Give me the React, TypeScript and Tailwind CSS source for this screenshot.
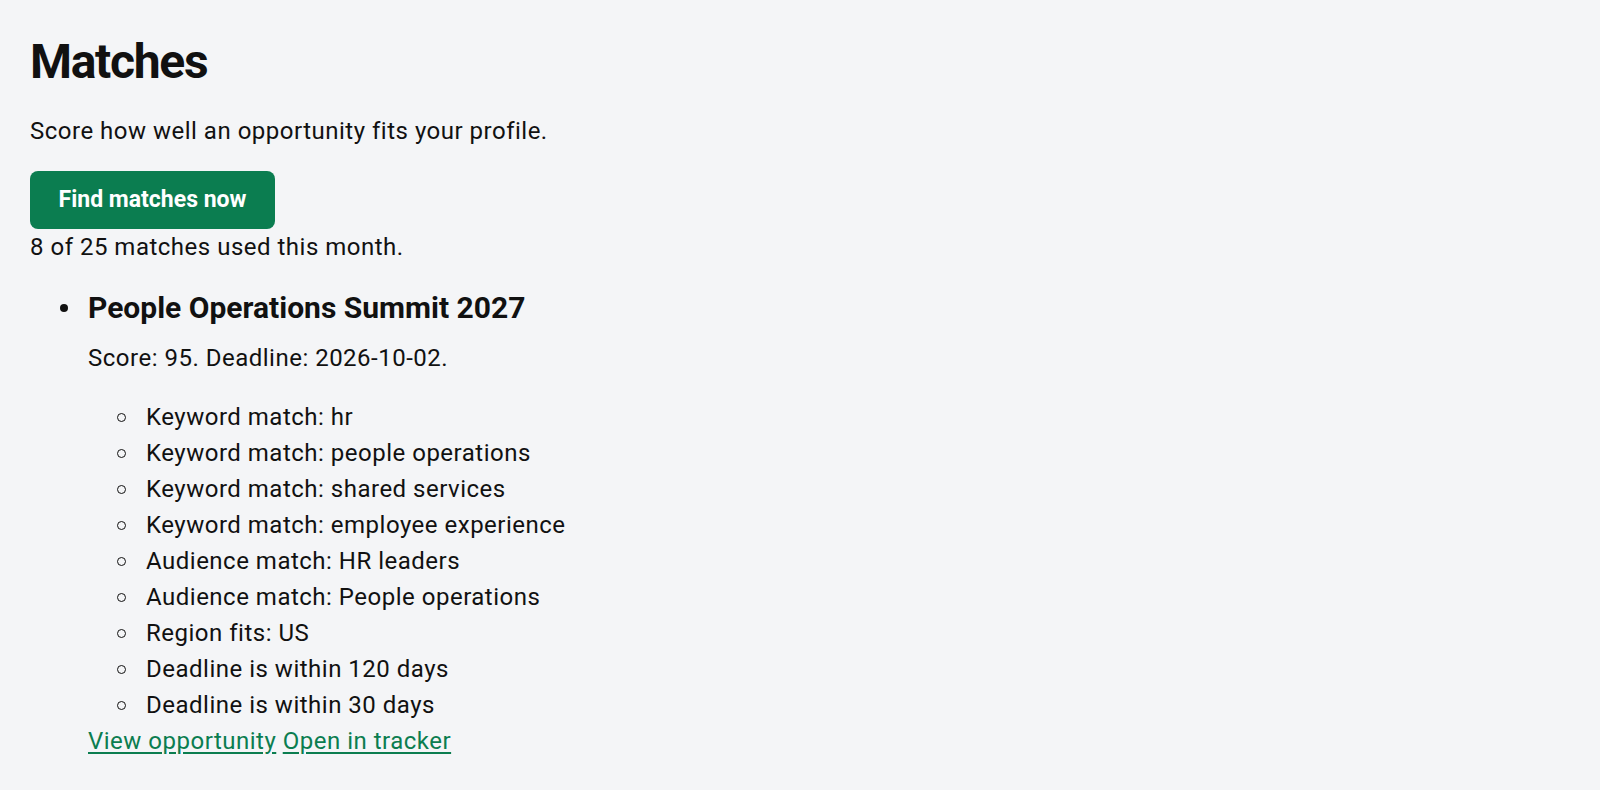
import React from "react";

const items = [
  "Keyword match: hr",
  "Keyword match: people operations",
  "Keyword match: shared services",
  "Keyword match: employee experience",
  "Audience match: HR leaders",
  "Audience match: People operations",
  "Region fits: US",
  "Deadline is within 120 days",
  "Deadline is within 30 days",
];

export default function App() {
  return (
    <div className="min-h-[790px] w-full bg-[#f4f5f7] text-[#111111] pl-[30px] pt-[33px]" style={{ fontFamily: "Roboto, 'Liberation Sans', sans-serif" }}>
      <h1 className="text-[48px] font-bold leading-[58px] tracking-[-1.3px]">Matches</h1>
      <p className="mt-[22px] text-[24px] leading-[36px] tracking-[0.5px]">Score how well an opportunity fits your profile.</p>
      <button className="mt-[22px] h-[58px] w-[245px] rounded-[8px] bg-[#0b7d50] text-white text-[23px] font-bold">
        Find matches now
      </button>
      <p className="text-[24px] leading-[36px] tracking-[0.5px]">8 of 25 matches used this month.</p>
      <div className="mt-[25px] flex">
        <div className="w-[58px] shrink-0 flex justify-end pr-[20px] pt-[14px]">
          <span className="block h-[8px] w-[8px] rounded-full bg-[#111111]" />
        </div>
        <div>
          <h2 className="text-[30px] font-bold leading-[36px]">People Operations Summit 2027</h2>
          <p className="mt-[14px] text-[24px] leading-[36px] tracking-[0.5px]">Score: 95. Deadline: 2026-10-02.</p>
          <ul className="mt-[23px]">
            {items.map((t) => (
              <li key={t} className="flex items-center text-[24px] leading-[36px] tracking-[0.5px]">
                <span className="w-[58px] shrink-0 flex justify-end pr-[20px]">
                  <span className="block h-[9px] w-[9px] rounded-full border-[1.5px] border-[#111111]" />
                </span>
                <span>{t}</span>
              </li>
            ))}
          </ul>
          <div className="text-[24px] leading-[36px] tracking-[0.5px] text-[#0b7d50]">
            <a href="#" className="underline underline-offset-[3px]">View opportunity</a>{" "}
            <a href="#" className="underline underline-offset-[3px]">Open in tracker</a>
          </div>
        </div>
      </div>
    </div>
  );
}
